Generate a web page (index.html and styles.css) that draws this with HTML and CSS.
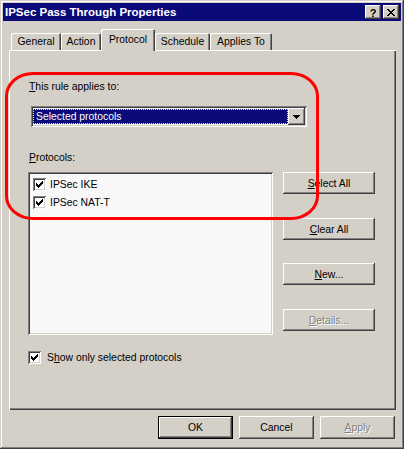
FILE: index.html
```html
<!DOCTYPE html>
<html>
<head>
<meta charset="utf-8">
<link rel="stylesheet" href="styles.css">
</head>
<body>
<div class="window">
  <div class="titlebar">
    <span class="title">IPSec Pass Through Properties</span>
    <div class="tbtns">
      <div class="tbtn help">?</div>
      <div class="tbtn close"><svg width="8" height="7" viewBox="0 0 8 7" shape-rendering="crispEdges"><path d="M0 0h2v1h-2zM6 0h2v1h-2zM1 1h2v1h-2zM5 1h2v1h-2zM2 2h4v1h-4zM3 3h2v1h-2zM2 4h4v1h-4zM1 5h2v1h-2zM5 5h2v1h-2zM0 6h2v1h-2zM6 6h2v1h-2z" fill="#000"/></svg></div>
    </div>
  </div>
  <div class="tabs">
    <div class="tab t-general">General</div>
    <div class="tab t-action">Action</div>
    <div class="tab t-protocol active">Protocol</div>
    <div class="tab t-schedule">Schedule</div>
    <div class="tab t-applies">Applies To</div>
  </div>
  <div class="panel">
    <div class="label"><u>T</u>his rule applies to:</div>
    <div class="combo">
      <div class="combo-value"><span>Selected protocols</span></div>
      <div class="combo-btn"><svg width="7" height="4" viewBox="0 0 7 4" shape-rendering="crispEdges"><path d="M0 0h7v1h-7zM1 1h5v1h-5zM2 2h3v1h-3zM3 3h1v1h-1z" fill="#000"/></svg></div>
    </div>
    <div class="label label-protocols"><u>P</u>rotocols:</div>
    <div class="listrow">
      <div class="list">
        <div class="item"><span class="cb"><svg width="7" height="7" viewBox="0 0 7 7" shape-rendering="crispEdges"><path d="M0 2h1v3H0zM1 3h1v3H1zM2 4h1v3H2zM3 3h1v3H3zM4 2h1v3H4zM5 1h1v3H5zM6 0h1v3H6z" fill="#000"/></svg></span><span class="item-text">IPSec IKE</span></div>
        <div class="item"><span class="cb"><svg width="7" height="7" viewBox="0 0 7 7" shape-rendering="crispEdges"><path d="M0 2h1v3H0zM1 3h1v3H1zM2 4h1v3H2zM3 3h1v3H3zM4 2h1v3H4zM5 1h1v3H5zM6 0h1v3H6z" fill="#000"/></svg></span><span class="item-text">IPSec NAT-T</span></div>
      </div>
      <div class="btncol">
        <div class="btn b-select"><u>S</u>elect All</div>
        <div class="btn b-clear"><u>C</u>lear All</div>
        <div class="btn b-new"><u>N</u>ew...</div>
        <div class="btn b-details disabled"><u>D</u>etails...</div>
      </div>
    </div>
    <div class="checkrow">
      <span class="cb"><svg width="7" height="7" viewBox="0 0 7 7" shape-rendering="crispEdges"><path d="M0 2h1v3H0zM1 3h1v3H1zM2 4h1v3H2zM3 3h1v3H3zM4 2h1v3H4zM5 1h1v3H5zM6 0h1v3H6z" fill="#000"/></svg></span>
      <span class="check-text">S<u>h</u>ow only selected protocols</span>
    </div>
  </div>
  <div class="footer">
    <div class="btn fbtn default">OK</div>
    <div class="btn fbtn">Cancel</div>
    <div class="btn fbtn disabled"><u>A</u>pply</div>
  </div>
  <div class="annotation"></div>
</div>
</body>
</html>
```
FILE: styles.css
```css
html, body {
  margin: 0;
  padding: 0;
  background: #d4d0c8;
}
body {
  font-family: "Liberation Sans", Arial, sans-serif;
  font-size: 10.4px;
  color: #000;
}
.window {
  position: relative;
  width: 404px;
  height: 449px;
  box-sizing: border-box;
  padding: 3px;
  background: #d4d0c8;
  box-shadow: inset -1px -1px #404040, inset 1px 1px #d4d0c8, inset -2px -2px #808080, inset 2px 2px #ffffff;
}
.titlebar {
  height: 18px;
  background: #0a0a78;
  display: flex;
  align-items: center;
  justify-content: space-between;
  padding-left: 2px;
}
.title {
  color: #fff;
  font-weight: bold;
  font-size: 11.5px;
  line-height: 18px;
}
.tbtns {
  display: flex;
  gap: 2px;
  margin-right: 2px;
}
.tbtn {
  width: 16px;
  height: 14px;
  box-sizing: border-box;
  background: #d4d0c8;
  box-shadow: inset -1px -1px #404040, inset 1px 1px #ffffff, inset -2px -2px #808080;
  display: flex;
  align-items: center;
  justify-content: center;
}
.help {
  font-weight: bold;
  font-size: 11px;
  line-height: 14px;
  padding-top: 1px;
}
.close svg { display: block; }
.tabs {
  display: flex;
  align-items: flex-end;
  height: 21px;
  margin-top: 8px;
  padding-left: 8px;
}
.tab {
  height: 17px;
  box-sizing: border-box;
  padding-top: 2px;
  line-height: 13px;
  text-align: center;
  border-radius: 2px 2px 0 0;
  background: #d4d0c8;
  box-shadow: inset 1px 1px #ffffff, inset -1px 0 #404040, inset -2px 0 #808080;
}
.t-general { width: 50px; }
.t-action { width: 40px; }
.t-protocol { width: 54px; }
.t-schedule { width: 55px; }
.t-applies { width: 62px; }
.tab.active {
  height: 22px;
  padding-top: 4px;
  margin-bottom: -1px;
  position: relative;
  z-index: 1;
}
.panel {
  width: 387px;
  height: 360px;
  margin-left: 6px;
  box-sizing: border-box;
  padding: 30px 0 0 19px;
  box-shadow: inset 1px 1px #ffffff, inset -1px -1px #404040, inset -2px -2px #808080;
}
.label {
  line-height: 13px;
  padding-left: 1px;
}
.label-protocols {
  margin-top: 24px;
}
.combo {
  margin-top: 13px;
  margin-left: 3px;
  width: 276px;
  height: 21px;
  box-sizing: border-box;
  padding: 2px;
  display: flex;
  background: #f8f8f8;
  box-shadow: inset 1px 1px #808080, inset -1px -1px #ffffff, inset 2px 2px #404040, inset -2px -2px #d4d0c8;
}
.combo-value {
  flex: 1;
  padding: 1px 0;
  display: flex;
}
.combo-value span {
  flex: 1;
  background: #0a0a78;
  color: #fff;
  border: 1px dotted #ffff00;
  line-height: 13px;
  padding-left: 2px;
}
.combo-btn {
  width: 17px;
  box-sizing: border-box;
  background: #d4d0c8;
  box-shadow: inset -1px -1px #404040, inset 1px 1px #ffffff, inset -2px -2px #808080;
  display: flex;
  align-items: center;
  justify-content: center;
}
.combo-btn svg { display: block; margin-top: 1px; }
.listrow {
  display: flex;
  margin-top: 8px;
}
.list {
  width: 245px;
  height: 163px;
  box-sizing: border-box;
  padding: 6px 0 0 5px;
  background: #f8f8f8;
  box-shadow: inset 1px 1px #808080, inset -1px -1px #ffffff, inset 2px 2px #404040, inset -2px -2px #d4d0c8;
}
.item {
  display: flex;
  align-items: center;
  height: 13px;
  margin-bottom: 5px;
}
.item-text {
  margin-left: 4px;
  line-height: 13px;
}
.cb {
  width: 13px;
  height: 13px;
  box-sizing: border-box;
  padding: 3px;
  background: #fff;
  box-shadow: inset 1px 1px #808080, inset -1px -1px #ffffff, inset 2px 2px #404040, inset -2px -2px #d4d0c8;
  display: block;
  flex: none;
}
.cb svg { display: block; }
.btncol {
  margin-left: 10px;
  display: flex;
  flex-direction: column;
}
.btn {
  width: 92px;
  height: 22px;
  box-sizing: border-box;
  background: #d4d0c8;
  box-shadow: inset -1px -1px #404040, inset 1px 1px #ffffff, inset -2px -2px #808080;
  display: flex;
  align-items: center;
  justify-content: center;
  line-height: 13px;
}
.b-clear { margin-top: 24px; }
.b-new { margin-top: 23px; }
.b-details { margin-top: 24px; }
.disabled {
  color: #808080;
  text-shadow: 1px 1px #ffffff;
}
.checkrow {
  margin-top: 16px;
  display: flex;
  align-items: center;
  height: 13px;
}
.check-text {
  margin-left: 6px;
  line-height: 13px;
}
.footer {
  display: flex;
  justify-content: flex-end;
  gap: 6px;
  margin-top: 6px;
  padding-right: 6px;
}
.fbtn {
  width: 75px;
  height: 23px;
}
.fbtn.default {
  box-shadow: inset 0 0 0 1px #000000, inset -2px -2px #404040, inset 2px 2px #ffffff, inset -3px -3px #808080;
}
.annotation {
  position: absolute;
  left: 5px;
  top: 72px;
  width: 314px;
  height: 148px;
  box-sizing: border-box;
  border: 3px solid #ff0000;
  border-radius: 28px / 24px;
  pointer-events: none;
}
```
